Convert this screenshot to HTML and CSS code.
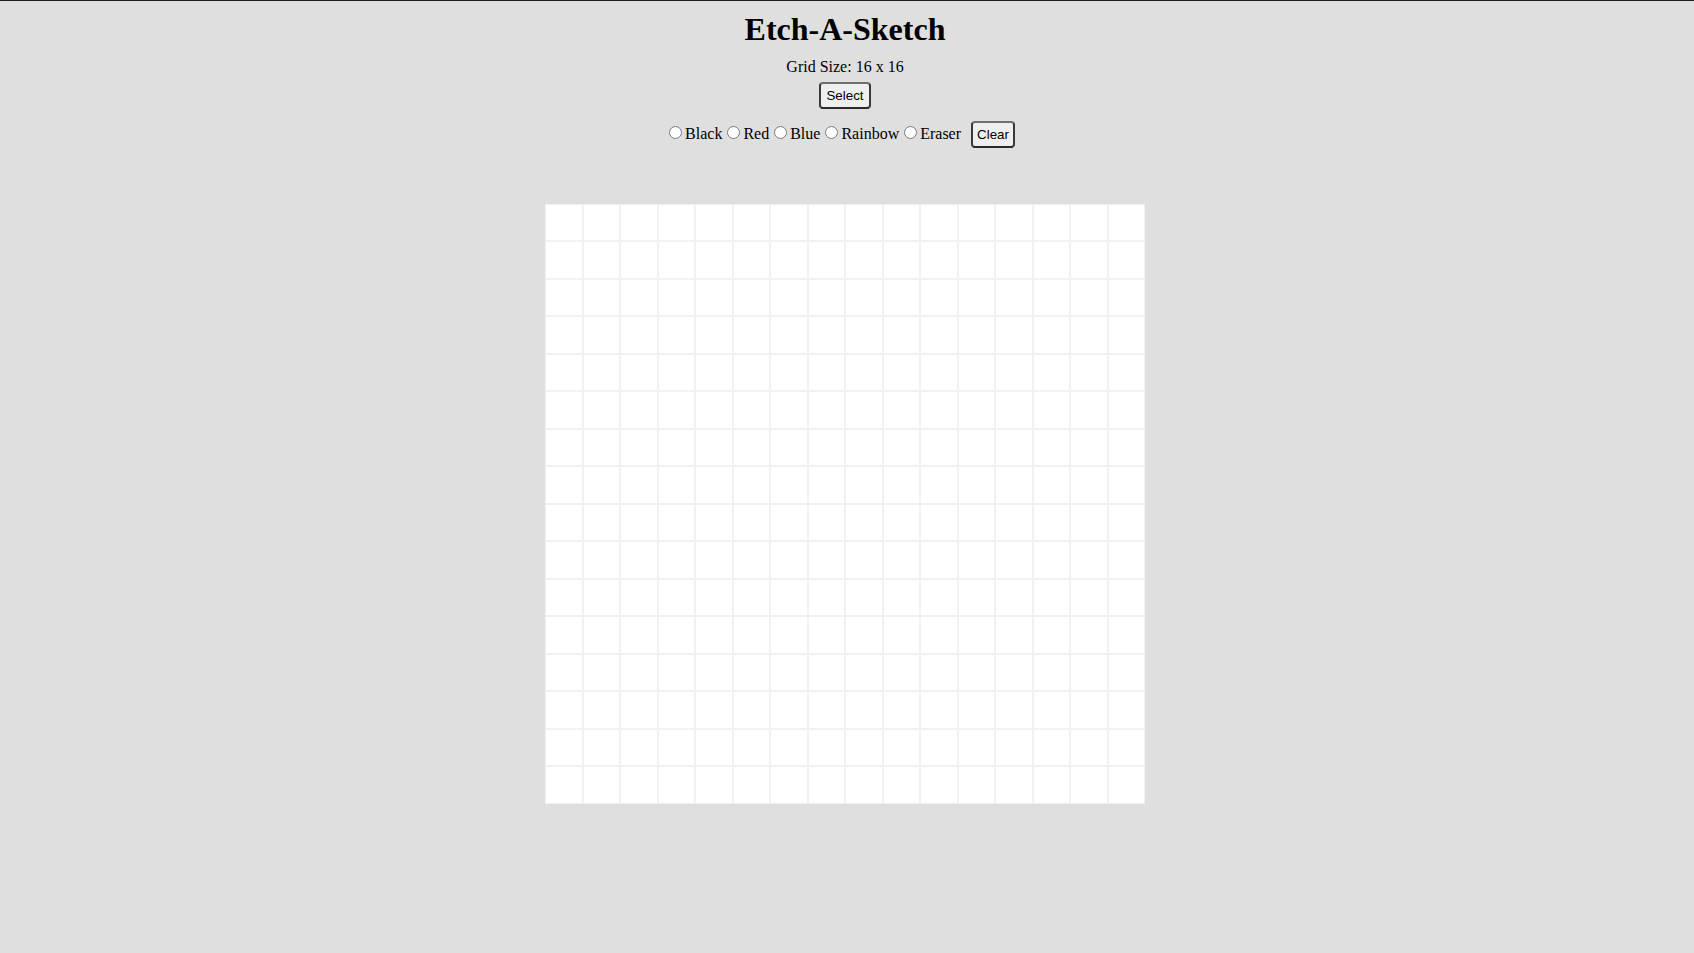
FILE: index.html
```html
<!DOCTYPE html>
<html lang="en">
<head>
<meta charset="utf-8">
<title>Etch-A-Sketch</title>
<link rel="stylesheet" href="styles.css">
</head>
<body>
<div class="page">
  <h1 class="title">Etch-A-Sketch</h1>
  <p class="size-label">Grid Size: 16 x 16</p>
  <div class="select-row"><button class="btn" type="button">Select</button></div>
  <div class="controls"><input class="radio" type="radio" name="color" id="black"><label for="black">Black</label><input class="radio" type="radio" name="color" id="red"><label for="red">Red</label><input class="radio" type="radio" name="color" id="blue"><label for="blue">Blue</label><input class="radio" type="radio" name="color" id="rainbow"><label for="rainbow">Rainbow</label><input class="radio" type="radio" name="color" id="eraser"><label for="eraser">Eraser</label><button class="btn btn-clear" type="button">Clear</button></div>
  <div class="grid" id="grid"></div>
</div>
<script src="script.js"></script>
</body>
</html>
```

FILE: styles.css
```css
html, body {
  margin: 0;
  padding: 0;
}
body {
  background: #dfdfdf;
  border-top: 1px solid #1c1c1c;
  font-family: "Liberation Serif", "Times New Roman", serif;
  font-size: 16px;
  color: #000;
  min-height: 952px;
  box-sizing: border-box;
}
.page {
  padding-right: 4px;
  text-align: center;
}
.title {
  font-size: 32px;
  font-weight: bold;
  margin: 9.5px 0 0;
  line-height: normal;
}
.size-label {
  margin: 10px 0 0;
}
.select-row {
  margin-top: 6px;
}
.btn {
  font-family: "Liberation Sans", Arial, sans-serif;
  font-size: 13.33px;
  color: #000;
  background: #efefef;
  border: 2px solid #3a3a3a;
  border-top-color: #707070;
  border-bottom-color: #2a2a2a;
  border-radius: 4px;
  padding: 4px 5.5px;
  line-height: normal;
  margin: 0;
}
.controls {
  margin-top: 12px;
  padding-right: 11px;
}
.radio {
  margin: 3px 3px 0 5px;
  width: 13px;
  height: 13px;
}
.btn-clear {
  margin-left: 10px;
  padding: 4px 4px;
}
.grid {
  width: 600px;
  height: 600px;
  margin: 56px auto 0;
  display: grid;
  grid-template-columns: repeat(16, 1fr);
  grid-template-rows: repeat(16, 1fr);
  background: #fff;
}
.cell {
  background: #fff;
  border: 1px solid #f1f1f1;
}
```

FILE: script.js
```js
const grid = document.getElementById('grid');
for (let i = 0; i < 256; i++) {
  const c = document.createElement('div');
  c.className = 'cell';
  grid.appendChild(c);
}
```
